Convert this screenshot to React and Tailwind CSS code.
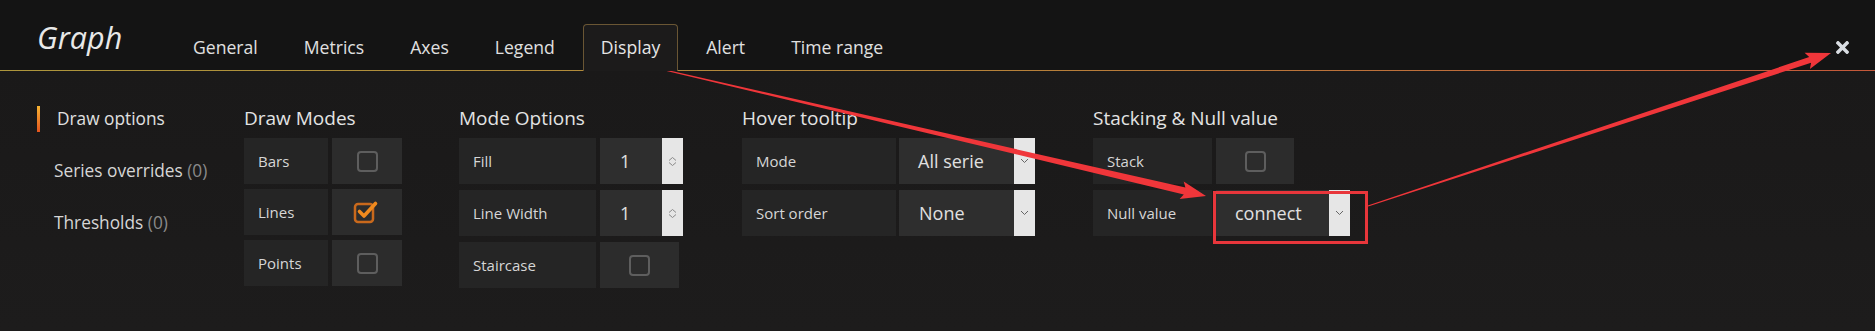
import { FaTimes } from 'react-icons/fa';

const tabs = ['General', 'Metrics', 'Axes', 'Legend', 'Display', 'Alert', 'Time range'];

// tapered arrow polygon, like a screenshot tool draws
function arrowPoints(sx, sy, ex, ey, tail, shaft, head, headLen) {
  const len = Math.hypot(ex - sx, ey - sy);
  const ux = (ex - sx) / len;
  const uy = (ey - sy) / len;
  const nx = -uy;
  const ny = ux;
  const bx = ex - ux * headLen;
  const by = ey - uy * headLen;
  const pts = [
    [sx + (nx * tail) / 2, sy + (ny * tail) / 2],
    [bx + (nx * shaft) / 2, by + (ny * shaft) / 2],
    [bx - ux * 3 + (nx * head) / 2, by - uy * 3 + (ny * head) / 2],
    [ex, ey],
    [bx - ux * 3 - (nx * head) / 2, by - uy * 3 - (ny * head) / 2],
    [bx - (nx * shaft) / 2, by - (ny * shaft) / 2],
    [sx - (nx * tail) / 2, sy - (ny * tail) / 2],
  ];
  return pts.map(([x, y]) => `${x.toFixed(1)},${y.toFixed(1)}`).join(' ');
}

const Checkbox = ({ checked }) =>
  checked ? (
    <svg width="28" height="26" viewBox="0 0 28 26" className="ml-[-2px] mt-[-3px]">
      <rect x="3" y="6" width="18" height="18" rx="3" fill="none" stroke="#c9691c" strokeWidth="2.5" />
      <path
        d="M7.5 13.5 L12 18 L23.5 5.5"
        fill="none"
        stroke="#f08a1e"
        strokeWidth="3.6"
        strokeLinecap="round"
        strokeLinejoin="round"
      />
    </svg>
  ) : (
    <div className="w-[21px] h-[21px] rounded-[4px] border-2 border-[#5e5e5e]" />
  );

const Label = ({ w, children }) => (
  <div className={`${w} h-full bg-[#252525] flex items-center pl-[14px] text-[15px] text-[#d6d6d6]`}>
    {children}
  </div>
);

const CheckCell = ({ w, checked }) => (
  <div className={`${w} h-full bg-[#2c2c2c] flex items-center justify-center`}>
    <Checkbox checked={checked} />
  </div>
);

const Spinner = () => (
  <div className="w-[21px] h-full bg-[#e6e6e6] flex flex-col items-center justify-center gap-[1px]">
    <svg width="9" height="4" viewBox="0 0 9 4">
      <path d="M1 3.5 L4.5 0.5 L8 3.5" fill="none" stroke="#8a8a8a" strokeWidth="1" />
    </svg>
    <svg width="9" height="4" viewBox="0 0 9 4">
      <path d="M1 0.5 L4.5 3.5 L8 0.5" fill="none" stroke="#8a8a8a" strokeWidth="1" />
    </svg>
  </div>
);

const SelectArrow = () => (
  <div className="w-[21px] h-full bg-[#e6e6e6] flex items-center justify-center">
    <svg width="9" height="6" viewBox="0 0 9 6">
      <path d="M1 1 L4.5 4.5 L8 1" fill="none" stroke="#666" strokeWidth="1" />
    </svg>
  </div>
);

const Section = ({ title, className, rowGap, children }) => (
  <div className={`flex flex-col ${className}`}>
    <div className="h-[24px] leading-[24px] text-[19px] text-[#e3e3e3] mb-[8px] whitespace-nowrap">{title}</div>
    <div className={`flex flex-col ${rowGap}`}>{children}</div>
  </div>
);

const Row = ({ children, gap = 'gap-[4px]' }) => <div className={`flex h-[46px] ${gap}`}>{children}</div>;

export default function App() {
  return (
    <div className="relative w-[1875px] h-[331px] overflow-hidden font-['Open_Sans','Liberation_Sans',sans-serif] bg-[#1c1b1b]">
      {/* header */}
      <div className="bg-[#141414]">
        <div className="flex items-end h-[70px] pl-[37px] pr-[23px]">
          <div className="self-start mt-[22px] w-[138px] text-[30.5px] leading-[30px] italic text-[#e8e8e8]">
            Graph
          </div>
          <div className="flex items-end gap-[10px]">
            {tabs.map((t) =>
              t === 'Display' ? (
                <div
                  key={t}
                  className="relative z-10 mb-[-1px] h-[47px] px-[17px] flex items-center pb-px text-[17.6px] text-[#e6e6e6] bg-[#1c1b1b] border border-b-0 border-[#6a5634] rounded-t-[4px]"
                >
                  {t}
                </div>
              ) : (
                <div key={t} className="h-[46px] px-[18px] flex items-center text-[17.6px] text-[#e0e0e0]">
                  {t}
                </div>
              )
            )}
          </div>
          <div className="ml-auto h-[46px] flex items-center">
            <FaTimes className="text-[#d9dde2]" size={19} />
          </div>
        </div>
        <div className="h-px bg-gradient-to-r from-[#ad963c] via-[#b4843a] to-[#c4583a]" />
      </div>

      {/* body */}
      <div className="flex pt-[35px] pl-[37px] h-[260px] bg-gradient-to-b from-[#1a1919] to-[#1d1c1c]">
        <div className="w-[207px] flex flex-col gap-[26px] text-[17.3px]">
          <div className="h-[26px] leading-[26px] pl-[17px] border-l-[3px] border-transparent [border-image:linear-gradient(to_bottom,#f7b733,#e2501d)_1] text-[#e0e0e0]">
            Draw options
          </div>
          <div className="h-[26px] leading-[26px] pl-[17px] text-[#d6d6d6]">
            Series overrides <span className="text-[#8a8a8a]">(0)</span>
          </div>
          <div className="h-[26px] leading-[26px] pl-[17px] text-[#d6d6d6]">
            Thresholds <span className="text-[#8a8a8a]">(0)</span>
          </div>
        </div>

        <Section title="Draw Modes" rowGap="gap-[5px]">
          <Row>
            <Label w="w-[84px]">Bars</Label>
            <CheckCell w="w-[70px]" />
          </Row>
          <Row>
            <Label w="w-[84px]">Lines</Label>
            <CheckCell w="w-[70px]" checked />
          </Row>
          <Row>
            <Label w="w-[84px]">Points</Label>
            <CheckCell w="w-[70px]" />
          </Row>
        </Section>

        <Section title="Mode Options" className="ml-[57px]" rowGap="gap-[6px]">
          <Row>
            <Label w="w-[137px]">Fill</Label>
            <div className="flex h-full">
              <div className="w-[62px] h-full bg-[#2e2e2e] flex items-center pl-[20px] text-[18px] text-[#e0e0e0]">1</div>
              <Spinner />
            </div>
          </Row>
          <Row>
            <Label w="w-[137px]">Line Width</Label>
            <div className="flex h-full">
              <div className="w-[62px] h-full bg-[#2e2e2e] flex items-center pl-[20px] text-[18px] text-[#e0e0e0]">1</div>
              <Spinner />
            </div>
          </Row>
          <Row>
            <Label w="w-[137px]">Staircase</Label>
            <CheckCell w="w-[79px]" />
          </Row>
        </Section>

        <Section title="Hover tooltip" className="ml-[59px]" rowGap="gap-[6px]">
          <Row gap="gap-[3px]">
            <Label w="w-[154px]">Mode</Label>
            <div className="flex h-full">
              <div className="w-[115px] h-full bg-[#2e2e2e] flex items-center pl-[19px] text-[18px] text-[#e0e0e0]">All serie</div>
              <SelectArrow />
            </div>
          </Row>
          <Row gap="gap-[3px]">
            <Label w="w-[154px]">Sort order</Label>
            <div className="flex h-full">
              <div className="w-[115px] h-full bg-[#2e2e2e] flex items-center pl-[20px] text-[18px] text-[#e0e0e0]">None</div>
              <SelectArrow />
            </div>
          </Row>
        </Section>

        <Section title="Stacking & Null value" className="ml-[58px]" rowGap="gap-[6px]">
          <Row>
            <Label w="w-[119px]">Stack</Label>
            <CheckCell w="w-[78px]" />
          </Row>
          <Row>
            <Label w="w-[119px]">Null value</Label>
            <div className="flex h-full">
              <div className="w-[113px] h-full bg-[#2e2e2e] flex items-center pl-[19px] text-[18px] text-[#e0e0e0]">connect</div>
              <SelectArrow />
            </div>
          </Row>
        </Section>
      </div>

      {/* red annotations drawn over the screenshot */}
      <svg className="absolute inset-0 pointer-events-none" width="1875" height="331" viewBox="0 0 1875 331">
        <rect x="1214.5" y="192.5" width="152" height="50" fill="none" stroke="#e8363b" strokeWidth="3" />
        <polygon points={arrowPoints(652, 67, 1206, 196, 1, 7, 18, 22)} fill="#f0363a" />
        <polygon points={arrowPoints(1368, 206, 1831, 53, 1, 6, 17, 22)} fill="#f0363a" />
      </svg>
    </div>
  );
}
